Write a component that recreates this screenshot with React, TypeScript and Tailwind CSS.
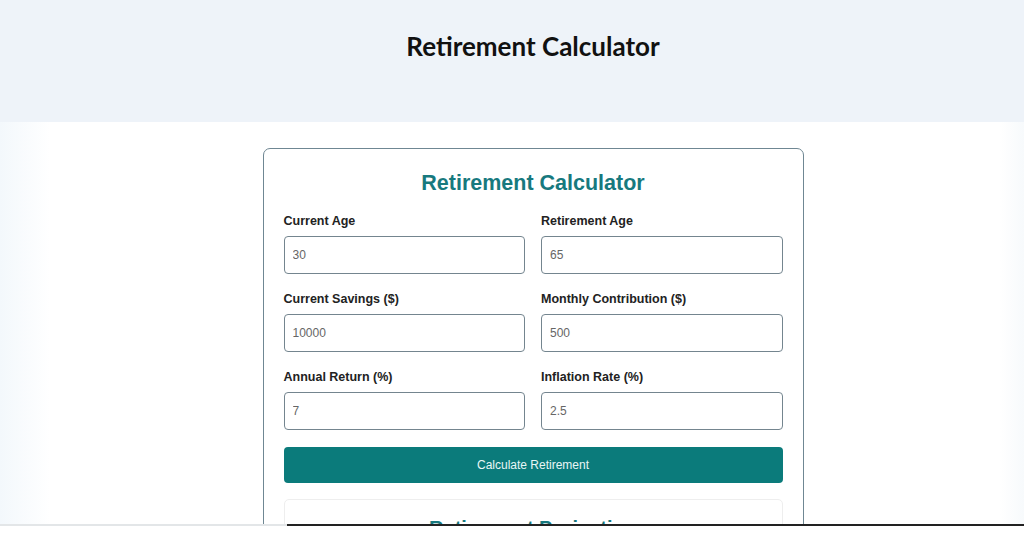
const fields = [
  { label: 'Current Age', value: '30' },
  { label: 'Retirement Age', value: '65' },
  { label: 'Current Savings ($)', value: '10000' },
  { label: 'Monthly Contribution ($)', value: '500' },
  { label: 'Annual Return (%)', value: '7' },
  { label: 'Inflation Rate (%)', value: '2.5' },
];

const Field = ({ label, value }: { label: string; value: string }) => (
  <div className="flex flex-col">
    <label className="text-[12.5px] font-bold text-[#222] leading-[18px] mb-[6px]">{label}</label>
    <input
      readOnly
      value={value}
      className="h-[38px] w-full rounded-[4px] border border-[#74858f] bg-white px-[8px] text-[12px] text-[#666] outline-none"
    />
  </div>
);

const App = () => {
  return (
    <div className="w-[1024px] h-[550px] overflow-hidden bg-white font-['Liberation_Sans',Arial,sans-serif]">
      <div className="h-[524px] overflow-hidden">
        <header className="h-[122px] bg-[#eef3f9] flex justify-center pl-[42px] pt-[29px]">
          <h1 className="font-['Lato',sans-serif] font-bold text-[26px] leading-[34px] text-[#111]">
            Retirement Calculator
          </h1>
        </header>

        <main className="flex justify-center pl-[42px] pt-[26px] bg-[linear-gradient(to_right,#f3f8fc,#ffffff_50px,#ffffff_1000px,#f7fafc)]">
          <div className="w-[541px] rounded-[7px] border border-[#6f8793] bg-white px-[20px] pt-[20px] pb-[20px]">
            <h2 className="text-center text-[21.5px] font-bold leading-[28px] text-[#17797e]">
              Retirement Calculator
            </h2>

            <div className="mt-[15px] grid grid-cols-2 gap-x-[16px] gap-y-[16px]">
              {fields.map((f) => (
                <Field key={f.label} label={f.label} value={f.value} />
              ))}
            </div>

            <button className="mt-[17px] h-[36px] w-full rounded-[4px] bg-[#0b7b7b] text-[12px] text-[#e8f6f6]">
              Calculate Retirement
            </button>

            <div className="mt-[16px] rounded-[5px] border border-[#eeeeee] px-[20px] pt-[15px] pb-[20px]">
              <h3 className="text-center text-[20px] font-bold leading-[26px] text-[#17797e]">
                Retirement Projection
              </h3>
              <div className="h-[120px]" />
            </div>
          </div>
        </main>
      </div>

      <div className="flex h-[2px]">
        <div className="w-[287px] bg-[#e3e6e8]" />
        <div className="flex-1 bg-[#222]" />
      </div>
      <div className="h-[24px] bg-white" />
    </div>
  );
};

export default App;
